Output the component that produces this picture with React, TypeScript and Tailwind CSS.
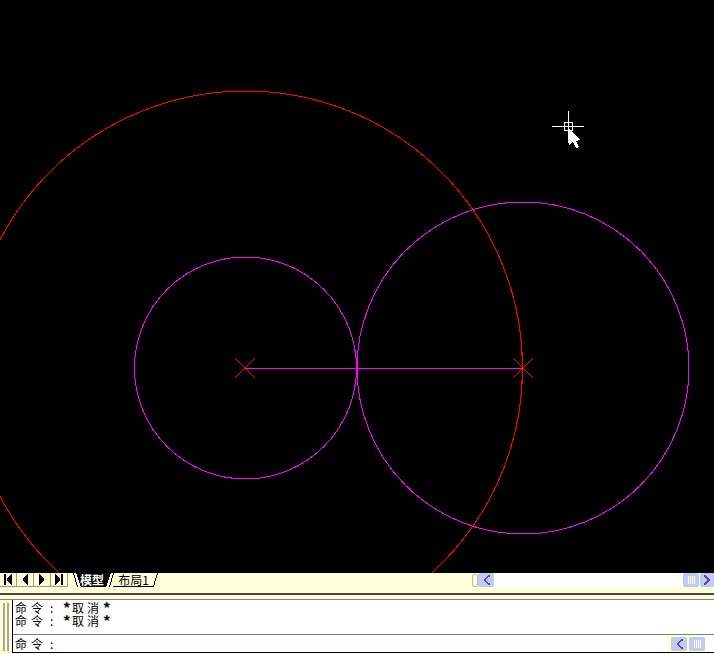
import React from "react";

const cjk = { fontFamily: '"Noto Sans CJK SC", "Liberation Sans", sans-serif' };

function NavButton({ d }: { d: string }) {
  return (
    <div className="flex h-full w-[17px] items-center justify-center border-r border-b border-[#9a9a8c]">
      <svg width="10" height="11" viewBox="0 0 10 11" shapeRendering="crispEdges">
        <path d={d} fill="#000" />
      </svg>
    </div>
  );
}

function LeftBtn() {
  return (
    <div className="flex h-[14px] w-[16px] items-center justify-center rounded-[2px] border border-[#b5d3d6] bg-[#c6c8fb]">
      <svg width="9" height="10" viewBox="0 0 9 10" shapeRendering="crispEdges">
        <path d="M6 0h2v2H6v1H5v1H4v2h1v1h1v1h2v2H6V9H5V8H4V7H3V6H2V4h1V3h1V2h1V1h1z" fill="#50508c" />
      </svg>
    </div>
  );
}

function RightBtn() {
  return (
    <div className="flex h-[14px] w-[14px] items-center justify-center rounded-l-[2px] border border-r-0 border-[#b5d3d6] bg-[#c6c8fb]">
      <svg width="9" height="10" viewBox="0 0 9 10" shapeRendering="crispEdges">
        <path d="M1 0h2v1h1v1h1v1h1v1h1v2H6v1H5v1H4v1H3v1H1V8h1V7h1V6h1V4H3V3H2V2H1z" fill="#50508c" />
      </svg>
    </div>
  );
}

function Thumb() {
  return (
    <div className="flex h-[14px] w-[16px] items-center justify-center gap-px rounded-[2px] border border-[#b5d3d6] bg-[#c6c8fb]">
      <span className="h-[8px] w-px bg-white" />
      <span className="h-[8px] w-px bg-white" />
      <span className="h-[8px] w-px bg-white" />
      <span className="h-[8px] w-px bg-white" />
    </div>
  );
}

function Prompt({ rest }: { rest?: boolean }) {
  return (
    <div className="flex h-[13px] items-center text-[12px] leading-[13px] text-black" style={cjk}>
      <span className="w-[16px]">命</span>
      <span className="w-[19px]">令</span>
      <span className="w-[13px]">:</span>
      {rest && (
        <>
          <span className="w-[9px] text-[15px] font-bold">*</span>
          <span className="w-[15px]">取</span>
          <span className="w-[16px]">消</span>
          <span className="text-[15px] font-bold">*</span>
        </>
      )}
    </div>
  );
}

export default function App() {
  return (
    <div className="flex h-[654px] w-[714px] flex-col overflow-hidden bg-[#ffffd9]">
      <div className="h-[573px] bg-black">
        <svg width="714" height="573" viewBox="0 0 714 573" shapeRendering="crispEdges" fill="none">
          <circle cx="245.5" cy="368" r="277" stroke="#ff0000" />
          <circle cx="245.5" cy="368" r="111" stroke="#ff00ff" />
          <circle cx="523" cy="368" r="166" stroke="#ff00ff" />
          <path d="M235 358l20 20M255 358l-20 20" stroke="#ff0000" />
          <path d="M513 358l20 20M533 358l-20 20" stroke="#ff0000" />
          <path d="M245 368.5h278" stroke="#ff00ff" />
          <path d="M552 126.5h32M568.5 111v32" stroke="#fff" />
          <rect x="564.5" y="122.5" width="8" height="8" stroke="#fff" fill="#000" />
          <path d="M564 126.5h9M568.5 122v9" stroke="#fff" />
          <path d="M569 129v16l4-3 3 6 3-1-3-6 4-1z" fill="#fff" />
        </svg>
      </div>

      <div className="flex h-[14px] items-stretch">
        <div className="flex">
          <NavButton d="M1 0h2v11H1zM9 0v11H8v-1H7V9H6V8H5V7H4V4h1V3h1V2h1V1h1V0z" />
          <NavButton d="M8 0v11H7v-1H6V9H5V8H4V7H3V4h1V3h1V2h1V1h1V0z" />
          <NavButton d="M2 0h1v1h1v1h1v1h1v1h1v3H6v1H5v1H4v1H3v1H2z" />
          <NavButton d="M1 0h1v1h1v1h1v1h1v1h1v3H5v1H4v1H3v1H2v1H1zM7 0h2v11H7z" />
        </div>
        <div className="relative ml-[5px] flex h-[14px] w-[38px] items-center justify-center">
          <svg className="absolute inset-0" width="38" height="14" viewBox="0 0 38 14" shapeRendering="crispEdges">
            <path d="M3 0h35l-5 14H8z" fill="#000" />
            <path d="M0.5 0l4 14" stroke="#000" fill="none" />
          </svg>
          <span className="relative text-[12px] font-bold leading-none text-white" style={cjk}>模型</span>
        </div>
        <div className="relative -ml-[2px] flex h-[14px] w-[49px] items-center justify-center">
          <svg className="absolute inset-0" width="49" height="14" viewBox="0 0 49 14" shapeRendering="crispEdges">
            <path d="M0.5 14l4-14M44.5 13.5l4-13.5M4 13.5h41" stroke="#000" fill="none" />
          </svg>
          <span className="relative text-[12px] leading-none text-black" style={cjk}>布局1</span>
        </div>
        <div className="ml-auto flex w-[242px] items-center bg-white">
          <div className="h-[13px] w-[6px] rounded-[2px] border border-[#b8b8b8] bg-[#ffffd9]" />
          <LeftBtn />
          <div className="ml-auto flex items-center gap-px">
            <Thumb />
            <RightBtn />
          </div>
        </div>
      </div>

      <div className="h-[6px]" />
      <div className="h-[2px] bg-[#4a4a44]" />
      <div className="h-[4px]" />
      <div className="h-[1px] bg-[#808080]" />

      <div className="flex h-[54px]">
        <div className="flex w-[12px] justify-center gap-[2px] py-[3px]">
          <span className="w-[2px] border-x border-[#a8a898] bg-[#ffffd9]" />
          <span className="w-[2px] border-x border-[#a8a898] bg-[#ffffd9]" />
        </div>
        <div className="mb-px flex flex-1 flex-col border-b border-l border-black bg-white">
          <div className="h-[35px] border-b border-[#808080] pl-[2px] pt-[1px]">
            <Prompt rest />
            <Prompt rest />
          </div>
          <div className="flex flex-1 items-center pl-[2px]">
            <Prompt />
            <div className="ml-auto mr-[9px] flex h-full items-center gap-[2px] bg-[#ffffd9] pl-[4px]">
              <LeftBtn />
              <Thumb />
            </div>
          </div>
        </div>
      </div>
    </div>
  );
}
